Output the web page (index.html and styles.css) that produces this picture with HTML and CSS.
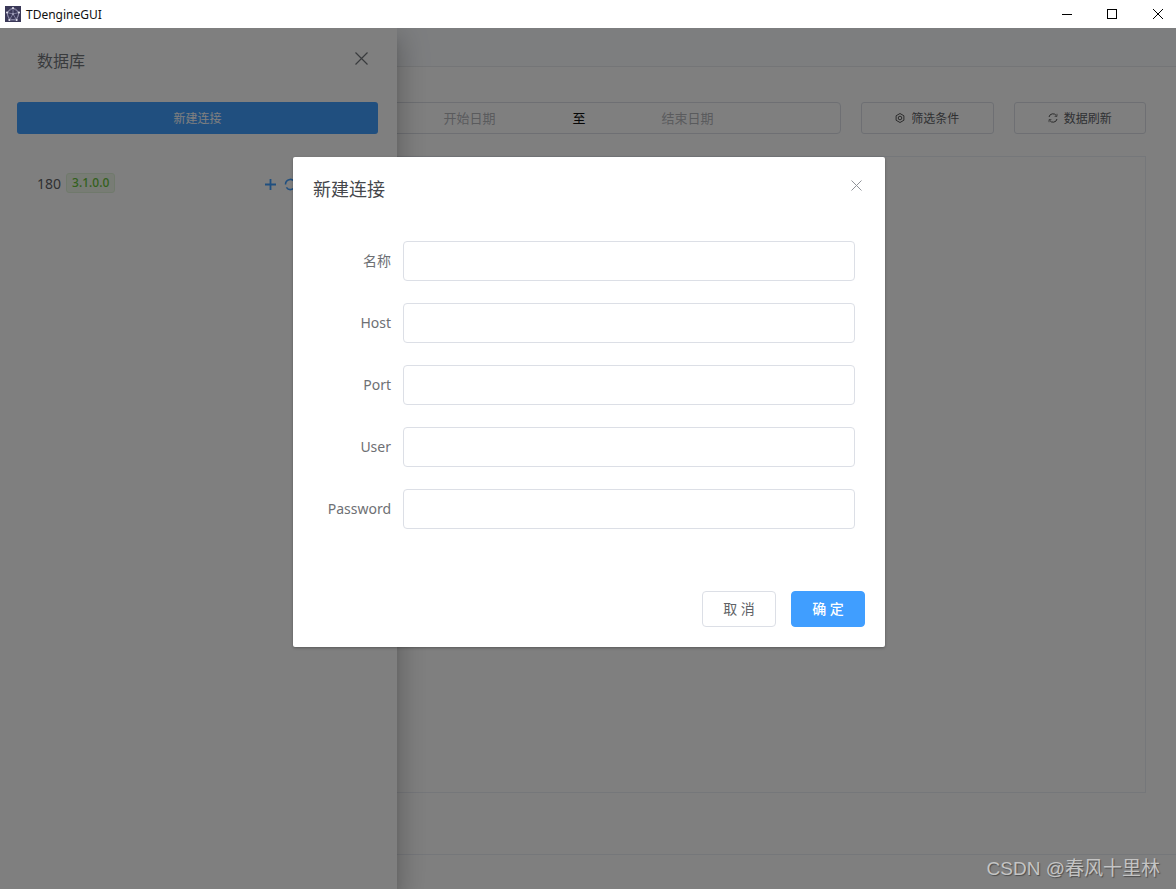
FILE: index.html
```html
<!DOCTYPE html>
<html lang="zh-CN">
<head>
    <meta charset="UTF-8">
    <title>TDengineGUI</title>
    <link rel="stylesheet" href="styles.css">
</head>
<body>
    <div class="titlebar">
        <svg class="app-logo" width="16" height="16" viewBox="0 0 16 16">
            <rect width="16" height="16" fill="#3a3858"/>
            <circle cx="8" cy="8" r="5.6" fill="none" stroke="#8f8da8" stroke-width=".7"/>
            <path d="M8 2 14 6.5 11.7 14H4.3L2 6.5Z M8 2V8 M2 6.5 8 8 14 6.5 M4.3 14 8 8 11.7 14" fill="none" stroke="#9a98b8" stroke-width=".7"/>
            <circle cx="8" cy="2" r="1" fill="#e4e3ee"/>
            <circle cx="14" cy="6.5" r="1" fill="#e4e3ee"/>
            <circle cx="2" cy="6.5" r="1" fill="#e4e3ee"/>
            <circle cx="4.3" cy="14" r="1" fill="#e4e3ee"/>
            <circle cx="11.7" cy="14" r="1" fill="#e4e3ee"/>
            <circle cx="8" cy="8" r=".8" fill="#c9c8da"/>
        </svg>
        <span class="app-name">TDengineGUI</span>
        <div class="win-controls">
            <svg width="10" height="10" viewBox="0 0 10 10"><path d="M0 5.5H10" stroke="#000"/></svg>
            <svg width="10" height="10" viewBox="0 0 10 10"><rect x=".5" y=".5" width="9" height="9" fill="none" stroke="#000"/></svg>
            <svg width="10" height="10" viewBox="0 0 10 10"><path d="M0 0 10 10M10 0 0 10" stroke="#000"/></svg>
        </div>
    </div>

    <div class="app">
        <div class="app-header"></div>
        <div class="app-main">
            <div class="toolbar">
                <div class="date-range">
                    <span class="date-text">开始日期</span>
                    <span class="date-sep">至</span>
                    <span class="date-text">结束日期</span>
                </div>
                <button class="tool-btn">
                    <svg width="10" height="10" viewBox="0 0 10 10"><path d="M5 .5 8.9 2.75V7.25L5 9.5 1.1 7.25V2.75Z" fill="none" stroke="#555"/><circle cx="5" cy="5" r="1.8" fill="none" stroke="#555"/></svg>
                    筛选条件
                </button>
                <button class="tool-btn">
                    <svg width="10" height="10" viewBox="0 0 10 10"><path d="M1 4A4 4 0 0 1 8.4 2.8M9 6A4 4 0 0 1 1.6 7.2" fill="none" stroke="#555"/><path d="M9 .8V3.4H6.6M1 9.2V6.6H3.4" fill="none" stroke="#555" stroke-width=".7"/></svg>
                    数据刷新
                </button>
            </div>
            <div class="chart-panel"></div>
        </div>
        <div class="app-footer"></div>

        <aside class="drawer">
            <div class="drawer-head">
                <span class="drawer-title">数据库</span>
                <svg width="13" height="13" viewBox="0 0 13 13"><path d="M.5.5 12.5 12.5M12.5.5 .5 12.5" stroke="#72767b" stroke-width="1.2"/></svg>
            </div>
            <button class="new-conn">新建连接</button>
            <div class="conn-row">
                <span class="conn-name">180</span>
                <span class="tag">3.1.0.0</span>
                <span class="conn-actions">
                    <svg width="11" height="11" viewBox="0 0 11 11"><path d="M5.5 0V11M0 5.5H11" stroke="#409eff" stroke-width="1.8"/></svg>
                    <svg width="13" height="13" viewBox="0 0 13 13"><path d="M1.5 6.5A5 5 0 0 1 10.6 3.6M11.5 6.5A5 5 0 0 1 2.4 9.4" fill="none" stroke="#409eff" stroke-width="1.6"/></svg>
                </span>
            </div>
        </aside>

        <div class="mask">
            <div class="dialog">
                <div class="dialog-head">
                    <span class="dialog-title">新建连接</span>
                    <svg class="dialog-close" width="11" height="11" viewBox="0 0 11 11"><path d="M.5.5 10.5 10.5M10.5.5 .5 10.5" stroke="#909399"/></svg>
                </div>
                <form class="dialog-form">
                    <div class="form-row"><label>名称</label><input type="text"></div>
                    <div class="form-row"><label>Host</label><input type="text"></div>
                    <div class="form-row"><label>Port</label><input type="text"></div>
                    <div class="form-row"><label>User</label><input type="text"></div>
                    <div class="form-row"><label>Password</label><input type="text"></div>
                </form>
                <div class="dialog-foot">
                    <button class="btn">取 消</button>
                    <button class="btn btn-primary">确 定</button>
                </div>
            </div>
        </div>

        <div class="watermark">CSDN @春风十里林</div>
    </div>
</body>
</html>
```

FILE: styles.css
```css
* { box-sizing: border-box; }
html, body { height: 100%; }
body {
    margin: 0;
    overflow: hidden;
    display: flex;
    flex-direction: column;
    font-family: "Noto Sans", "Noto Sans CJK SC", sans-serif;
    color: #606266;
    background: #fff;
}
button { font-family: inherit; }

/* window frame */
.titlebar {
    height: 28px;
    flex: none;
    display: flex;
    align-items: center;
    padding-left: 5px;
    background: #fff;
}
.app-logo { display: block; }
.app-name {
    margin-left: 5px;
    font-size: 12px;
    color: #111;
}
.win-controls {
    margin-left: auto;
    padding-right: 13px;
    display: flex;
    gap: 35px;
}
.win-controls svg { display: block; }
.win-controls svg:last-child { margin-left: 1px; }

/* app behind the mask */
.app {
    flex: 1;
    position: relative;
    display: flex;
    flex-direction: column;
    overflow: hidden;
}
.app-header {
    height: 39px;
    flex: none;
    background: #fafcff;
    border-bottom: 1px solid #e9ebee;
}
.app-main {
    flex: 1;
    padding: 35px 30px 0 380px;
}
.toolbar {
    display: flex;
    gap: 20px;
    height: 32px;
}
.date-range {
    flex: 1;
    display: flex;
    align-items: center;
    border: 1px solid #dcdfe6;
    border-radius: 4px;
    padding: 0 0 2px 36px;
    font-size: 13px;
}
.date-text { width: 105px; text-align: center; color: #b4b6bb; }
.date-sep { width: 46px; margin: 0 33px 0 34px; text-align: center; color: #111; }
.tool-btn {
    width: 132.5px;
    display: flex;
    align-items: center;
    justify-content: center;
    gap: 6px;
    background: #fff;
    border: 1px solid #dcdfe6;
    border-radius: 3px;
    font-size: 12px;
    color: #606266;
    padding: 0;
}
.chart-panel {
    height: 637px;
    margin-top: 22px;
    border: 1px solid #ebeef5;
}
.app-footer {
    height: 35px;
    flex: none;
    border-top: 1px solid #ebeef5;
}

/* left drawer */
.drawer {
    position: absolute;
    left: 0;
    top: 0;
    bottom: 0;
    width: 397px;
    padding: 0 17px;
    background: #fff;
    box-shadow: 0 8px 10px -5px rgba(0,0,0,.2), 0 16px 24px 2px rgba(0,0,0,.14), 0 6px 30px 5px rgba(0,0,0,.12);
}
.drawer-head {
    height: 74px;
    display: flex;
    align-items: center;
    justify-content: space-between;
    padding: 0 12px 10px 20px;
}
.drawer-title { font-size: 16px; color: #72767b; }
.drawer-head svg { display: block; margin-bottom: 3px; }
.new-conn {
    display: block;
    width: 361px;
    height: 32px;
    background: #409eff;
    border: 0;
    border-radius: 3px;
    font-size: 12px;
    color: #fff;
    padding: 0;
}
.conn-row {
    margin-top: 39px;
    padding-left: 20px;
    height: 20px;
    display: flex;
    align-items: center;
}
.conn-name { font-size: 14px; color: #606266; }
.tag {
    margin-left: 5px;
    height: 20px;
    line-height: 18px;
    padding: 0 5px;
    background: #f0f9eb;
    border: 1px solid #e1f3d8;
    border-radius: 3px;
    font-size: 12px;
    font-weight: 500;
    color: #67c23a;
}
.conn-actions {
    margin: 3px 0 0 150px;
    display: flex;
    align-items: center;
    gap: 8px;
}
.conn-actions svg { display: block; }

/* dialog, over everything else */
.mask {
    position: absolute;
    inset: 0;
    padding: 129px 0 0 293px;
    background: rgba(0, 0, 0, .5);
}
.dialog {
    width: 592px;
    height: 490px;
    display: flex;
    flex-direction: column;
    background: #fff;
    border-radius: 2px;
    box-shadow: 0 1px 3px rgba(0,0,0,.3);
}
.dialog-head {
    height: 84px;
    flex: none;
    padding: 19px 20px 0;
    display: flex;
    justify-content: space-between;
}
.dialog-title {
    font-size: 18px;
    line-height: 26px;
    color: #45474b;
}
.dialog-close { margin: 4px 3px 0 0; }
.dialog-form {
    flex: 1;
    padding-right: 30px;
    display: flex;
    flex-direction: column;
    gap: 22px;
}
.form-row {
    display: flex;
    align-items: center;
    height: 40px;
}
.form-row label {
    width: 98px;
    text-align: right;
    margin: 0 12px 2px 0;
    font-size: 14px;
    color: #6e7074;
}
.form-row input {
    flex: 1;
    height: 40px;
    border: 1px solid #dcdfe6;
    border-radius: 4px;
    background: #fff;
    outline: none;
}
.dialog-foot {
    height: 56px;
    flex: none;
    padding-right: 20px;
    display: flex;
    justify-content: flex-end;
    gap: 15px;
}
.btn {
    width: 74px;
    height: 36px;
    background: #fff;
    border: 1px solid #dcdfe6;
    border-radius: 4px;
    font-size: 14px;
    color: #606266;
    padding: 0 0 2px;
}
.btn-primary {
    background: #409eff;
    border-color: #409eff;
    color: #fff;
    font-weight: 500;
}

.watermark {
    position: absolute;
    right: 16px;
    bottom: 8px;
    font-family: "Liberation Sans", "Noto Sans CJK SC", sans-serif;
    font-size: 19px;
    line-height: 24px;
    color: #c4c4c4;
    text-shadow: 1px 1px 1px #4e4e4e;
}
```
